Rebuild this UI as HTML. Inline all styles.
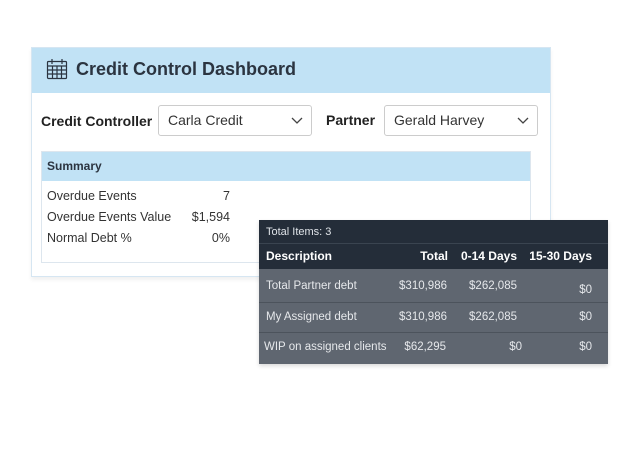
<!DOCTYPE html>
<html><head><style>
*{box-sizing:border-box;margin:0;padding:0}
body{width:630px;height:454px;background:#fff;font-family:"Liberation Sans",sans-serif;position:relative;overflow:hidden;color:#222}
.card{position:absolute;left:31px;top:47px;width:520px;height:230px;background:#fff;border:1px solid #d6e6f2;box-shadow:0 3px 4px rgba(0,0,0,0.06)}
.hdr{position:absolute;left:0;top:0;width:518px;height:45px;background:#c1e2f5}
.hdr .t{position:absolute;left:44px;top:11px;font-size:18px;font-weight:bold;color:#2b3440}
.lbl{position:absolute;font-size:14px;font-weight:bold;color:#222}
.sel{position:absolute;top:57px;height:31px;border:1px solid #ccc;border-radius:3px;font-size:14px;color:#333;padding:6px 0 0 9px}
.sel svg{position:absolute;right:8px;top:11px}
.sum{position:absolute;left:9px;top:103px;width:490px;height:112px;border:1px solid #dde6ee}
.sum .sh{height:29px;background:#c1e2f5;font-size:12px;font-weight:bold;padding:7px 0 0 5px;color:#2b3440}
.row{position:absolute;left:5px;font-size:12.5px;color:#333}
.val{position:absolute;right:300px;font-size:12.5px;color:#333;text-align:right}
.tbl{position:absolute;left:259px;top:220px;width:349px;height:144px;background:#5f6670;box-shadow:0 2px 4px rgba(0,0,0,.15);font-size:11.5px;color:#eef}
.tbl .top{height:24px;background:#242d39;color:#dfe3e8;padding:6px 0 0 7px;font-size:11px;border-bottom:1px solid #3a4450}
.tbl .ch{height:25px;background:#242d39;color:#fff;font-weight:bold;font-size:12px;position:relative}
.tbl .r{height:30px;position:relative;border-bottom:1px solid #4c535c;color:#e6e8eb}
.c{position:absolute;white-space:nowrap}
</style></head><body>
<div class="card">
 <div class="hdr">
  <svg style="position:absolute;left:14px;top:10px" width="22" height="22" viewBox="0 0 22 22" fill="none" stroke="#2b3440" stroke-width="1.2"><rect x="1.5" y="3.5" width="19" height="17" rx="1"/><path d="M6 1v5M16 1v5M1.5 8h19M1.5 12h19M1.5 16h19M6.5 8v12.5M11 8v12.5M15.5 8v12.5"/></svg>
  <div class="t">Credit Control Dashboard</div>
 </div>
 <div class="lbl" style="left:9px;top:65px">Credit Controller</div>
 <div class="sel" style="left:126px;width:154px">Carla Credit<svg width="12" height="8" viewBox="0 0 12 8"><path d="M1 1l5 5 5-5" stroke="#444" fill="none" stroke-width="1.3"/></svg></div>
 <div class="lbl" style="left:294px;top:64px">Partner</div>
 <div class="sel" style="left:352px;width:154px">Gerald Harvey<svg width="12" height="8" viewBox="0 0 12 8"><path d="M1 1l5 5 5-5" stroke="#444" fill="none" stroke-width="1.3"/></svg></div>
 <div class="sum">
  <div class="sh">Summary</div>
  <div class="row" style="top:37px">Overdue Events</div><div class="val" style="top:37px">7</div>
  <div class="row" style="top:58px">Overdue Events Value</div><div class="val" style="top:58px">$1,594</div>
  <div class="row" style="top:79px">Normal Debt %</div><div class="val" style="top:79px">0%</div>
 </div>
</div>
<div class="tbl">
 <div class="top">Total Items: 3</div>
 <div class="ch"><span class="c" style="left:7px;top:5px">Description</span><span class="c" style="right:160px;top:5px">Total</span><span class="c" style="right:91px;top:5px">0-14 Days</span><span class="c" style="right:16px;top:5px">15-30 Days</span></div>
 <div class="r" style="height:34px"><span class="c" style="left:7px;top:11px">Total Partner debt</span><span class="c" style="right:161px;top:11px">$310,986</span><span class="c" style="right:91px;top:11px">$262,085</span><span class="c" style="right:16px;top:15px">$0</span></div>
 <div class="r"><span class="c" style="left:7px;top:8px">My Assigned debt</span><span class="c" style="right:161px;top:8px">$310,986</span><span class="c" style="right:91px;top:8px">$262,085</span><span class="c" style="right:16px;top:8px">$0</span></div>
 <div class="r" style="border:0"><span class="c" style="left:5px;top:8px">WIP on assigned clients</span><span class="c" style="right:162px;top:8px">$62,295</span><span class="c" style="right:86px;top:8px">$0</span><span class="c" style="right:16px;top:8px">$0</span></div>
</div>
</body></html>
